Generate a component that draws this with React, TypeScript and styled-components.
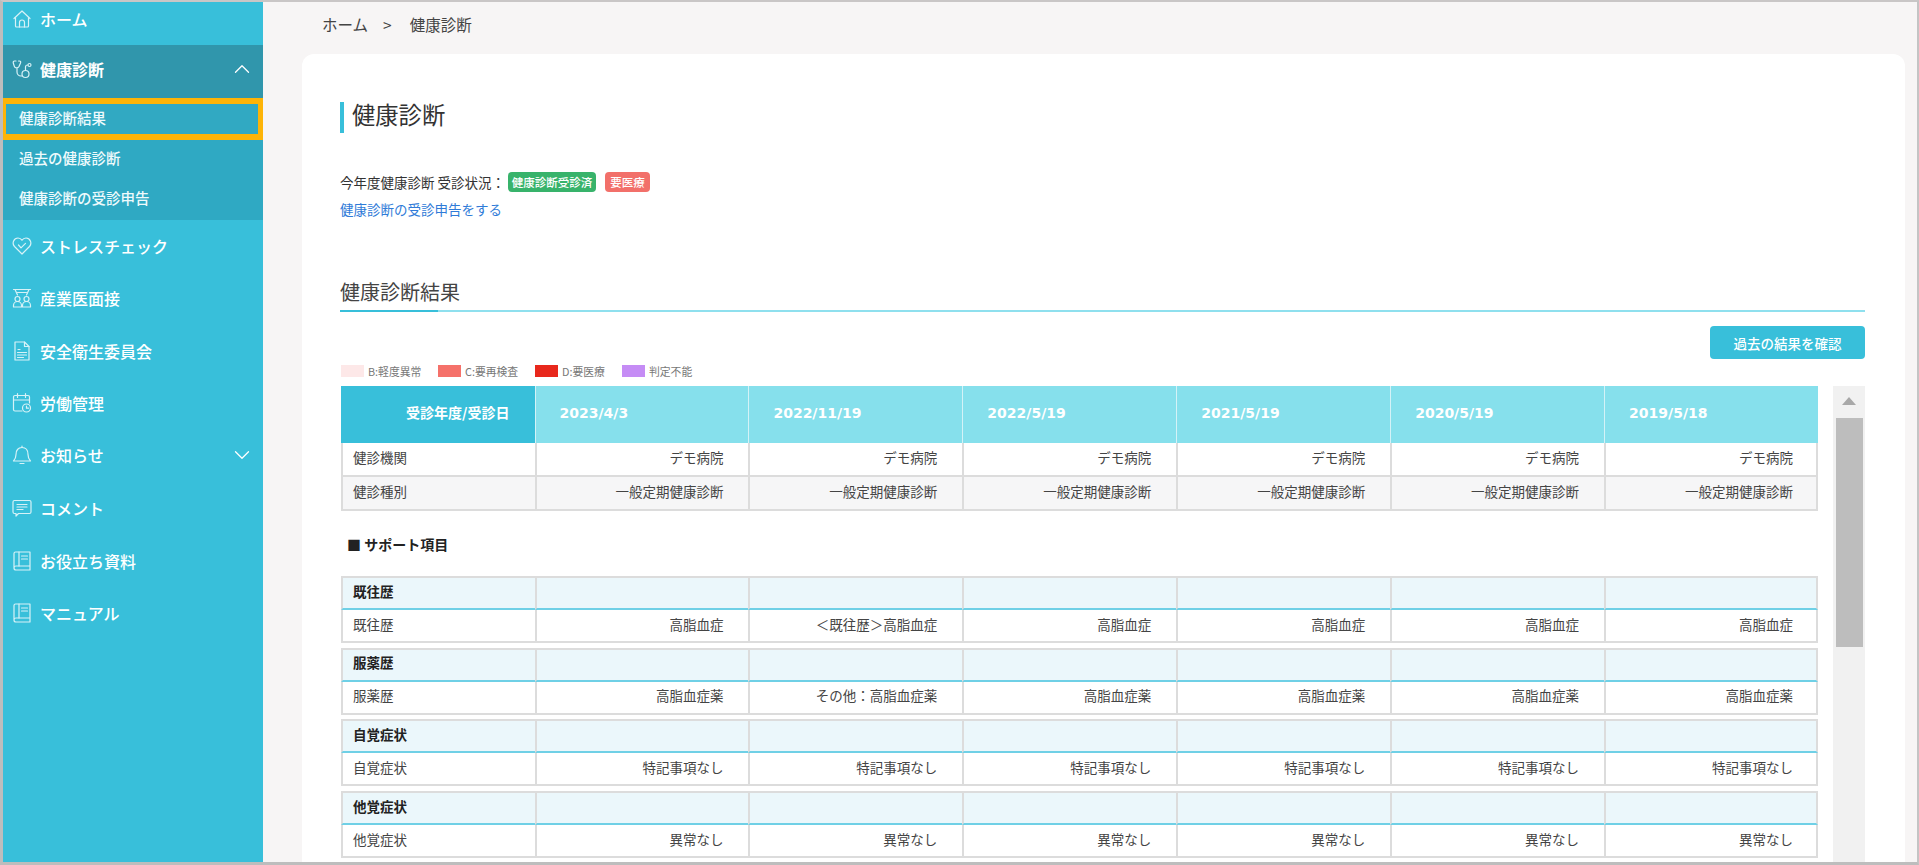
import React from "react";
import styled, { createGlobalStyle } from "styled-components";
import { ChevronDown, ChevronUp } from "lucide-react";

const CJK = `"Noto Sans CJK JP", "Noto Sans", sans-serif`;
const LATIN = `"DejaVu Sans", "Noto Sans CJK JP", sans-serif`;

const Global = createGlobalStyle`
  html, body { margin: 0; padding: 0; height: 865px; overflow: hidden; background: #f7f5f5; }
  #root { height: 865px; }
  * { box-sizing: border-box; }
`;

const Frame = styled.div`
  width: 1919px;
  height: 865px;
  display: flex;
  overflow: hidden;
  border-top: 2px solid #c9c6c6;
  border-left: 3px solid #bdbdbd;
  border-right: 2px solid #c4c4c4;
  border-bottom: 3px solid #bdbdbd;
  font-family: ${CJK};
  color: #333;
`;

const Sidebar = styled.nav`
  width: 260px;
  flex: none;
  background: #38bfda;
  color: #fff;
  display: flex;
  flex-direction: column;
`;

const MenuItem = styled.div<{ $open?: boolean; $h: number; $pb: number }>`
  height: ${(p) => p.$h}px;
  flex: none;
  display: flex;
  align-items: center;
  padding: 0 8px ${(p) => p.$pb}px 9px;
  font-size: 16px;
  font-weight: ${(p) => (p.$open ? 700 : 500)};
  background: ${(p) => (p.$open ? "#3096ac" : "transparent")};
`;

const MenuIcon = styled.svg`
  width: 20px;
  height: 22px;
  flex: none;
  margin-right: 8px;
  fill: none;
  stroke: #d7f2f7;
  stroke-width: 1.2;
  stroke-linecap: round;
  stroke-linejoin: round;
`;

const MenuLabel = styled.span`
  flex: 1;
  white-space: nowrap;
`;

const SubMenu = styled.div`
  background: #2fa9c3;
  height: 122px;
  flex: none;
  display: flex;
  flex-direction: column;
`;

const SubItem = styled.div<{ $active?: boolean; $h: number }>`
  height: ${(p) => p.$h}px;
  flex: none;
  display: flex;
  align-items: center;
  padding: 0 0 4px 16px;
  font-size: 14.5px;
  font-weight: 500;
  color: #eefafc;
  ${(p) =>
    p.$active
      ? `margin-left: -3px; padding: 0 0 3px 13px; border: 6px solid #fdb407; background: #31a9c2; border-right-width: 5px;`
      : ""}
`;

const Main = styled.main`
  flex: 1;
  min-width: 0;
  display: flex;
  flex-direction: column;
  padding: 0 12px 0 39px;
`;

const Crumbs = styled.div`
  height: 52px;
  flex: none;
  display: flex;
  align-items: center;
  padding: 0 0 8px 20px;
  font-size: 15.5px;
  color: #444;
`;

const CrumbSep = styled.span`
  margin: 0 18px 0 15px;
`;

const Card = styled.section`
  flex: 1;
  background: #fff;
  border-radius: 12px 12px 0 0;
  padding: 48px 40px 0 38px;
  overflow: hidden;
`;

const PageTitle = styled.h1`
  margin: 0;
  height: 31px;
  border-left: 4px solid #38bfda;
  padding-left: 8px;
  font-size: 23.3px;
  line-height: 25px;
  font-weight: 400;
  color: #333;
`;

const StatusRow = styled.div`
  margin-top: 38px;
  height: 21px;
  display: flex;
  align-items: center;
  font-size: 13.5px;
  color: #333;
`;

const Badge = styled.span<{ $bg: string; $w: number; $gap: number }>`
  width: ${(p) => p.$w}px;
  height: 20px;
  margin-left: ${(p) => p.$gap}px;
  border-radius: 4px;
  background: ${(p) => p.$bg};
  color: #fff;
  font-size: 11.5px;
  font-weight: 500;
  display: inline-flex;
  align-items: center;
  justify-content: center;
  white-space: nowrap;
`;

const ApplyLink = styled.a`
  display: block;
  margin-top: 7px;
  font-size: 13.5px;
  line-height: 20px;
  color: #2f7bd8;
`;

const SectionHead = styled.h2`
  margin: 57px 0 0;
  height: 36px;
  font-size: 20px;
  line-height: 32px;
  font-weight: 400;
  color: #444;
  border-bottom: 2px solid #8fe0ee;
  position: relative;
  &::after {
    content: "";
    position: absolute;
    left: 0;
    bottom: -2px;
    width: 98px;
    height: 2px;
    background: #38bfda;
  }
`;

const ActionRow = styled.div`
  display: flex;
  justify-content: flex-end;
  margin-top: 14px;
  height: 33px;
`;

const ActionButton = styled.button`
  width: 155px;
  height: 33px;
  border: 0;
  border-radius: 4px;
  background: #38bfda;
  color: #fff;
  font-family: ${CJK};
  font-size: 13.5px;
  font-weight: 500;
`;

const Legend = styled.div`
  display: flex;
  align-items: center;
  height: 14px;
  margin-top: 5px;
  font-size: 10.8px;
  color: #777;
  padding-left: 1px;
`;

const Swatch = styled.i<{ $c: string }>`
  width: 23px;
  height: 12px;
  background: ${(p) => p.$c};
  margin-right: 4px;
  flex: none;
`;

const LegendLabel = styled.span<{ $w: number }>`
  width: ${(p) => p.$w}px;
  white-space: nowrap;
`;

const TableWrap = styled.div`
  margin-top: 8px;
  display: flex;
  align-items: stretch;
  height: 480px;
`;

const Tables = styled.div`
  width: 1477px;
  flex: none;
  margin-left: 1px;
`;

const Grid = styled.div`
  display: grid;
  grid-template-columns: 193.5px repeat(6, 1fr);
`;

const HeadMain = styled.div`
  height: 57px;
  background: #38bfda;
  color: #fff;
  font-weight: 700;
  font-size: 14px;
  display: flex;
  align-items: center;
  justify-content: flex-end;
  padding: 0 25px 6px 0;
`;

const HeadDate = styled.div`
  height: 57px;
  background: #86e0ec;
  border-left: 1px solid #d4f2f7;
  color: #fff;
  font-family: ${LATIN};
  font-weight: 700;
  font-size: 14px;
  display: flex;
  align-items: center;
  padding: 0 0 3px 24px;
`;

const Cell = styled.div<{ $label?: boolean; $shade?: boolean; $h: number; $last?: boolean }>`
  height: ${(p) => p.$h}px;
  background: ${(p) => (p.$shade ? "#f6f6f7" : "#fff")};
  border-bottom: 2px solid #dcdcdc;
  border-left: 2px solid #dcdcdc;
  ${(p) => (p.$last ? "border-right: 2px solid #dcdcdc;" : "")}
  font-size: 13.5px;
  color: #444;
  display: flex;
  align-items: center;
  justify-content: ${(p) => (p.$label ? "flex-start" : "flex-end")};
  padding: 0 ${(p) => (p.$label ? 0 : p.$last ? 23 : 25)}px 4px ${(p) => (p.$label ? 10 : 0)}px;
  white-space: nowrap;
`;

const SupportTitle = styled.div`
  height: 16px;
  margin: 25px 0 24px 6px;
  font-size: 14px;
  line-height: 16px;
  font-weight: 700;
  color: #222;
`;

const Group = styled(Grid)`
  margin-bottom: 4.7px;
  border-top: 2px solid #dcdcdc;
`;

const GroupHead = styled.div<{ $last?: boolean }>`
  height: 32px;
  background: #ebf7fb;
  border-left: 2px solid #dcdcdc;
  ${(p) => (p.$last ? "border-right: 2px solid #dcdcdc;" : "")}
  border-bottom: 2px solid #6fd0e6;
  font-size: 13.5px;
  font-weight: 700;
  color: #222;
  display: flex;
  align-items: center;
  padding: 0 0 5px 10px;
`;

const Scrollbar = styled.div`
  width: 32px;
  flex: none;
  margin-left: 15px;
  background: #f1f1f1;
  display: flex;
  flex-direction: column;
  align-items: center;
`;

const ScrollArrow = styled.div`
  width: 0;
  height: 0;
  margin-top: 11px;
  border-left: 7px solid transparent;
  border-right: 7px solid transparent;
  border-bottom: 8px solid #a8a8a8;
`;

const ScrollThumb = styled.div`
  width: 27px;
  height: 229px;
  margin-top: 13px;
  background: #bdbdbd;
`;

const dates = ["2023/4/3", "2022/11/19", "2022/5/19", "2021/5/19", "2020/5/19", "2019/5/18"];

type Row = { title: string; values: string[] };
const same = (v: string) => Array(6).fill(v) as string[];
const groups: Row[] = [
  { title: "既往歴", values: ["高脂血症", "＜既往歴＞高脂血症", "高脂血症", "高脂血症", "高脂血症", "高脂血症"] },
  { title: "服薬歴", values: ["高脂血症薬", "その他：高脂血症薬", "高脂血症薬", "高脂血症薬", "高脂血症薬", "高脂血症薬"] },
  { title: "自覚症状", values: same("特記事項なし") },
  { title: "他覚症状", values: same("異常なし") },
];

const icons: Record<string, React.ReactNode> = {
  home: (
    <>
      <path d="M2 10.5 10 3l8 7.5" />
      <path d="M3.5 9.5V18a1 1 0 0 0 1 1h11a1 1 0 0 0 1-1V9.5" />
      <path d="M7.5 19v-4.5a2.5 2.5 0 0 1 5 0V19" />
    </>
  ),
  steth: (
    <>
      <path d="M4 3H2.5C1.5 3 1 4 1.3 5l1 3.2C3 10.5 6 10.5 7 8.5L8.5 5C9 4 8.5 3 7.5 3H6.5" />
      <path d="M5 10.5V14a4 4 0 0 0 4 4h1" />
      <circle cx="13.5" cy="16" r="3.5" />
      <path d="M13.5 12.5V9a2 2 0 0 1 2-2" />
      <circle cx="17.5" cy="7" r="1.5" />
    </>
  ),
  heart: (
    <>
      <path d="M10 19 2.5 11.5C-.5 8 2 3 6 3c1.8 0 3.2 1 4 2.3C10.8 4 12.2 3 14 3c4 0 6.5 5 3.5 8.5Z" />
      <path d="m6.5 10 2.5 2.8 4.5-4.5" />
    </>
  ),
  doctor: (
    <>
      <path d="M1.5 2.500h17M3 2.500l2.500 5.500M17 2.500 14.500 8M5.500 5.500h9" />
      <circle cx="5.5" cy="12" r="2.5" />
      <circle cx="14.5" cy="12" r="2.5" />
      <path d="M1.500 20v-1.500a4 4 0 0 1 8 0V20ZM10.500 20v-1.500a4 4 0 0 1 8 0V20Z" />
    </>
  ),
  doc: (
    <>
      <path d="M3 2h9.500L17 6.500V20H3Z" />
      <path d="M12.500 2v4.500H17M6 9.500h2M5.500 12.500h9M5.500 15h9M5.500 17.500h6" />
    </>
  ),
  calendar: (
    <>
      <path d="M10 19H3a1.500 1.500 0 0 1-1.500-1.500V5A1.500 1.500 0 0 1 3 3.500h13A1.500 1.500 0 0 1 17.500 5v6" />
      <path d="M5.500 1.500v4M13.500 1.500v4M1.500 8h16" />
      <circle cx="14.5" cy="16" r="4" />
      <path d="M14.500 14v2.200h2" />
    </>
  ),
  bell: (
    <>
      <path d="M1.500 17c1.500-1.500 2.500-3 2.500-6.500C4 6 6.500 3.500 10 3.500s6 2.500 6 7c0 3.500 1 5 2.500 6.500Z" />
      <path d="M10 3.500V2M8 19.500h4" />
    </>
  ),
  comment: (
    <>
      <path d="M2.500 3.500h15a1.500 1.500 0 0 1 1.500 1.500v10a1.500 1.500 0 0 1-1.500 1.500H6.500L4 19v-2.500H2.500A1.500 1.500 0 0 1 1 15V5a1.500 1.500 0 0 1 1.500-1.500Z" />
      <path d="M5 7.500h10M5 10h10M5 12.500h6" />
    </>
  ),
  book: (
    <>
      <path d="M2 17.500V3.500A1.500 1.500 0 0 1 3.500 2H18v14H4a2 2 0 0 0 0 4h14v-4" />
      <path d="M7 2v14M9.500 6h6M9.500 9h6" />
    </>
  ),
};

const Icon = ({ name }: { name: string }) => <MenuIcon viewBox="0 0 20 22">{icons[name]}</MenuIcon>;

const Item = ({
  icon,
  label,
  h,
  pb = 1,
  open,
  chevron,
}: {
  icon: string;
  label: string;
  h: number;
  pb?: number;
  open?: boolean;
  chevron?: "up" | "down";
}) => (
  <MenuItem $h={h} $pb={pb} $open={open}>
    <Icon name={icon} />
    <MenuLabel>{label}</MenuLabel>
    {chevron === "up" && <ChevronUp size={26} strokeWidth={1.2} />}
    {chevron === "down" && <ChevronDown size={26} strokeWidth={1.2} />}
  </MenuItem>
);

export default function App() {
  return (
    <>
      <Global />
      <Frame>
        <Sidebar>
          <Item icon="home" label="ホーム" h={43} pb={10} />
          <Item icon="steth" label="健康診断" h={53} pb={5} open chevron="up" />
          <SubMenu>
            <SubItem $active $h={42}>健康診断結果</SubItem>
            <SubItem $h={39}>過去の健康診断</SubItem>
            <SubItem $h={41}>健康診断の受診申告</SubItem>
          </SubMenu>
          <Item icon="heart" label="ストレスチェック" h={52} />
          <Item icon="doctor" label="産業医面接" h={53} pb={2} />
          <Item icon="doc" label="安全衛生委員会" h={52} />
          <Item icon="calendar" label="労働管理" h={53} pb={2} />
          <Item icon="bell" label="お知らせ" h={52} pb={2} chevron="down" />
          <Item icon="comment" label="コメント" h={53} pb={2} />
          <Item icon="book" label="お役立ち資料" h={52} />
          <Item icon="book" label="マニュアル" h={53} />
        </Sidebar>
        <Main>
          <Crumbs>
            ホーム<CrumbSep>&gt;</CrumbSep>健康診断
          </Crumbs>
          <Card>
            <PageTitle>健康診断</PageTitle>
            <StatusRow>
              今年度健康診断 受診状況：
              <Badge $bg="#38b36b" $w={88} $gap={3}>健康診断受診済</Badge>
              <Badge $bg="#f2706a" $w={45} $gap={9}>要医療</Badge>
            </StatusRow>
            <ApplyLink>健康診断の受診申告をする</ApplyLink>
            <SectionHead>健康診断結果</SectionHead>
            <ActionRow>
              <ActionButton>過去の結果を確認</ActionButton>
            </ActionRow>
            <Legend>
              <Swatch $c="#fde8e8" /><LegendLabel $w={70}>B:軽度異常</LegendLabel>
              <Swatch $c="#f5716a" /><LegendLabel $w={70}>C:要再検査</LegendLabel>
              <Swatch $c="#e8281c" /><LegendLabel $w={60}>D:要医療</LegendLabel>
              <Swatch $c="#c58cf5" /><LegendLabel $w={60}>判定不能</LegendLabel>
            </Legend>
            <TableWrap>
              <Tables>
                <Grid>
                  <HeadMain>受診年度/受診日</HeadMain>
                  {dates.map((d) => <HeadDate key={d}>{d}</HeadDate>)}
                  <Cell $label $h={34}>健診機関</Cell>
                  {same("デモ病院").map((v, i) => <Cell key={i} $h={34} $last={i === 5}>{v}</Cell>)}
                  <Cell $label $shade $h={34}>健診種別</Cell>
                  {same("一般定期健康診断").map((v, i) => <Cell key={i} $shade $h={34} $last={i === 5}>{v}</Cell>)}
                </Grid>
                <SupportTitle>■ サポート項目</SupportTitle>
                {groups.map((g) => (
                  <Group key={g.title}>
                    <GroupHead>{g.title}</GroupHead>
                    {g.values.map((_, i) => <GroupHead key={i} $last={i === 5} />)}
                    <Cell $label $h={33}>{g.title}</Cell>
                    {g.values.map((v, i) => <Cell key={i} $h={33} $last={i === 5}>{v}</Cell>)}
                  </Group>
                ))}
              </Tables>
              <Scrollbar>
                <ScrollArrow />
                <ScrollThumb />
              </Scrollbar>
            </TableWrap>
          </Card>
        </Main>
      </Frame>
    </>
  );
}
